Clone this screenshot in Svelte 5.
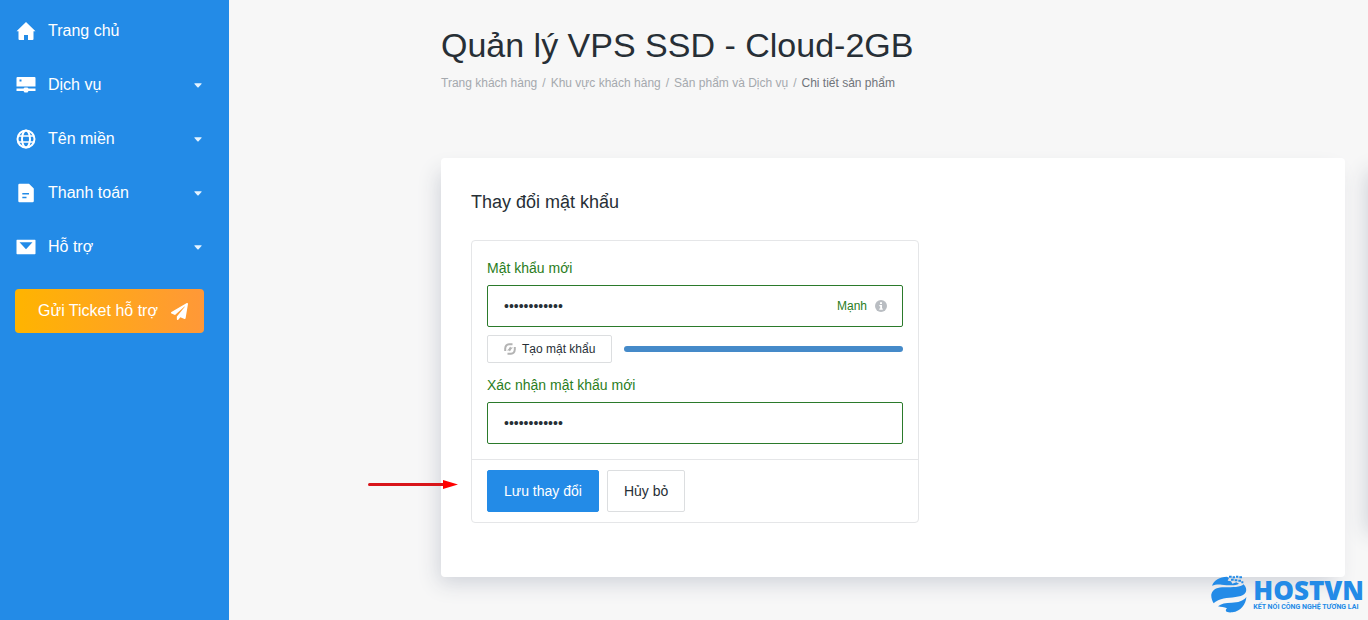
<script>
    const menu = [
        { name: 'Trang chủ', icon: 'home' },
        { name: 'Dịch vụ', icon: 'server', children: true },
        { name: 'Tên miền', icon: 'globe', children: true },
        { name: 'Thanh toán', icon: 'file', children: true },
        { name: 'Hỗ trợ', icon: 'mail', children: true },
    ];

    const crumbs = ['Trang khách hàng', 'Khu vực khách hàng', 'Sản phẩm và Dịch vụ'];

    let password = $state('cloudvps2024');
    let confirmation = $state('cloudvps2024');
    let strength = $state(100);

    function generate() {
        const chars = 'abcdefghjkmnpqrstuvwxyz23456789';
        password = Array.from({ length: 12 }, () => chars[Math.floor(Math.random() * chars.length)]).join('');
        confirmation = password;
        strength = 100;
    }

    function reset() {
        password = '';
        confirmation = '';
        strength = 0;
    }
</script>

<div class="page">
    <aside class="sidebar">
        <nav>
            {#each menu as item}
                <a class="menu-item" href="#{item.icon}">
                    <svg class="menu-icon" viewBox="0 0 20 20" fill="#fff" aria-hidden="true">
                        {#if item.icon === 'home'}
                            <path d="M10 1 L19.5 10.2 H17.5 V18 Q17.5 19 16.5 19 H12 V14 H8 V19 H3.5 Q2.5 19 2.5 18 V10.2 H.5 Z" />
                        {:else if item.icon === 'server'}
                            <path fill-rule="evenodd" d="M1.5 2 H18.5 Q19.5 2 19.5 3 V11.5 H.5 V3 Q.5 2 1.5 2 Z M3.5 4.500 V6.500 H5.5 V4.500 Z" />
                            <path d="M.5 13.500 H7.500 L8.500 12.500 H11.500 L12.500 13.500 H19.5 V16 H12.500 L11.500 17.5 H8.500 L7.500 16 H.5 Z" />
                        {:else if item.icon === 'globe'}
                            <g fill="none" stroke="#fff" stroke-width="2">
                                <circle cx="10" cy="10" r="8.5" />
                                <ellipse cx="10" cy="10" rx="4" ry="8.5" />
                                <path d="M2 7 H18 M2 13 H18" stroke-width="1.700" />
                            </g>
                        {:else if item.icon === 'file'}
                            <path fill-rule="evenodd" d="M3.5 .8 H13 L17.8 5.5 V18 Q17.8 19.3 16.5 19.3 H3.5 Q2.3 19.3 2.3 18 V2 Q2.3 .8 3.5 .8 Z M6.3 10 V11.5 H13 V10 Z M6.3 13.8 V15.3 H10.5 V13.8 Z" />
                        {:else}
                            <path fill-rule="evenodd" d="M1 2.8 H19 Q19.5 2.8 19.5 3.5 V16.5 Q19.5 17.3 18.8 17.3 H1.2 Q.5 17.3 .5 16.5 V3.5 Q.5 2.8 1 2.8 Z M3.5 5.2 L10 12.3 L16.5 5.2 Z" />
                        {/if}
                    </svg>
                    <span class="menu-name">{item.name}</span>
                    {#if item.children}
                        <svg class="caret" viewBox="0 0 8 5" fill="#e4f3ff" aria-hidden="true"><path d="M.8 .3 H7.2 Q8 .5 7.5 1.1 L4.6 4.3 Q4 4.8 3.4 4.3 L.5 1.1 Q0 .5 .8 .3 Z" /></svg>
                    {/if}
                </a>
            {/each}
        </nav>
        <a class="ticket" href="#ticket">
            Gửi Ticket hỗ trợ
            <svg class="plane" viewBox="0 0 512 512" fill="#fff" aria-hidden="true">
                <path d="M476 3.2 12.500 270.600c-18.100 10.400-15.800 35.600 2.200 43.200L121 358.400l287.300-253.200c5.500-4.900 13.300 2.600 8.600 8.300L176 407v80.500c0 23.600 28.500 32.900 42.500 15.800L282 426l124.600 52.200c14.200 6 30.400-2.900 33-18.200l72-432C515 7.800 493.300-6.800 476 3.200z" />
            </svg>
        </a>
    </aside>

    <main class="content">
        <header class="page-header">
            <h1>Quản lý VPS SSD - Cloud-2GB</h1>
            <nav class="breadcrumb">
                {#each crumbs as crumb}
                    <a href="#top">{crumb}</a>
                    <span class="slash">/</span>
                {/each}
                <span class="current">Chi tiết sản phẩm</span>
            </nav>
        </header>

        <div class="columns">
            <section class="card">
                <h2>Thay đổi mật khẩu</h2>

                <form class="panel" onsubmit={(e) => e.preventDefault()}>
                    <div class="panel-body">
                        <label for="password">Mật khẩu mới</label>
                        <div class="field">
                            <input id="password" type="password" bind:value={password} />
                            <span class="strength">
                                Mạnh
                                <svg viewBox="0 0 12 12" aria-hidden="true">
                                    <circle cx="6" cy="6" r="6" fill="#b9bdc2" />
                                    <path d="M5 2.200 H7 V4 H5 Z M4.300 5 H7 V8.500 H7.800 V9.700 H4.300 V8.500 H5.200 V6.200 H4.300 Z" fill="#fff" />
                                </svg>
                            </span>
                        </div>
                        <div class="generator">
                            <button type="button" class="button small" onclick={generate}>
                                <svg viewBox="0 0 12 12" fill="none" stroke="#b3b3b3" stroke-width="2" aria-hidden="true">
                                    <path d="M1.200 8 V5.500 Q1.500 1.500 5 1.200 H8.500 M10.800 4 V6.500 Q10.500 10.500 7 10.800 H3.500" />
                                    <path d="M4.500 3 V7 H8.500 Z M7.500 9 V5 H3.500 Z" fill="#b3b3b3" stroke="none" transform="rotate(90 6 6)" />
                                </svg>
                                Tạo mật khẩu
                            </button>
                            <div class="progress">
                                <div class="progress-bar" style="width: {strength}%"></div>
                            </div>
                        </div>
                        <label for="confirmation">Xác nhận mật khẩu mới</label>
                        <div class="field">
                            <input id="confirmation" type="password" bind:value={confirmation} />
                        </div>
                    </div>
                    <div class="panel-footer">
                        <button type="submit" class="button primary">Lưu thay đổi</button>
                        <button type="button" class="button" onclick={reset}>Hủy bỏ</button>
                    </div>
                </form>
            </section>
            <div class="side-card"></div>
        </div>
    </main>

    <svg class="pointer" viewBox="0 0 90 10" aria-hidden="true">
        <path d="M1.500 4.500 H76" stroke="#d8151a" stroke-width="3" stroke-linecap="round" />
        <path d="M75 0 L90 4.500 L75 9 Z" fill="#f00" />
    </svg>

    <div class="brand">
        <svg class="brand-mark" viewBox="12 20 108 114" fill="#238be7" aria-hidden="true">
            <path d="M15 52 C21 36 38 25 60 25 L66 29 L62 37 L72 39 L76 46 L88 42 L96 46 C84 54 62 50 44 49 C32 48 24 49 15 52 Z" />
            <path d="M13 78 C18 61 33 57 52 57 C78 57 100 57 110 48 C121 60 120 73 108 80 C92 89 62 86 42 93 C32 96 26 100 20 105 C15 97 12 88 13 78 Z" />
            <path d="M33 114 C42 106 56 103 74 103 C93 103 109 98 118 86 C117 108 101 129 76 132 C58 134 52 128 60 120 C52 116 42 116 33 114 Z" />
            <path d="M66 22 h8 v6 h-8 z M77 24 h7 v6 h-7 z M72 31 h8 v6 h-8 z M87 22 h7 v6 h-7 z M83 33 h8 v6 h-8 z M97 24 h8 v6 h-8 z M94 34 h8 v6 h-8 z M103 39 h6 v6 h-6 z" />
        </svg>
        <div class="brand-text">
            <strong>HOSTVN</strong>
            <span>KẾT NỐI CÔNG NGHỆ TƯƠNG LAI</span>
        </div>
    </div>
</div>

<style>
    :global(body) {
        margin: 0;
        background: #f7f7f7;
    }

    .page {
        position: relative;
        display: flex;
        min-height: 100vh;
        overflow: hidden;
        font-family: "Liberation Sans", Arial, sans-serif;
        font-size: 14px;
        color: #272f36;
    }

    a {
        text-decoration: none;
    }

    .sidebar {
        box-sizing: border-box;
        flex: none;
        width: 229px;
        padding: 4px 0;
        background: #238be7;
    }

    .menu-item {
        display: flex;
        align-items: center;
        height: 54px;
        padding: 0 27px 0 16px;
        color: #fff;
        font-size: 16px;
    }

    .menu-icon {
        width: 20px;
        height: 20px;
        margin-right: 12px;
    }

    .menu-name {
        flex: 1;
    }

    .caret {
        width: 8px;
        height: 5px;
    }

    .ticket {
        display: flex;
        align-items: center;
        justify-content: space-between;
        height: 44px;
        margin: 15px 25px 0 15px;
        padding: 0 16px 0 23px;
        border-radius: 4px;
        background: linear-gradient(90deg, #ffb400, #ff9838);
        color: #fff;
        font-size: 16px;
    }

    .plane {
        width: 17px;
        height: 17px;
    }

    .content {
        flex: 1;
        min-width: 0;
        padding: 24px 0 43px 212px;
    }

    h1 {
        margin: 0;
        font-size: 34px;
        font-weight: 400;
        line-height: 42px;
    }

    .breadcrumb {
        display: flex;
        gap: 5px;
        margin-top: 8px;
        font-size: 12px;
        line-height: 18px;
    }

    .breadcrumb a,
    .slash {
        color: #a5a9ae;
    }

    .current {
        color: #70747a;
    }

    .columns {
        display: flex;
        gap: 23px;
        margin-top: 66px;
    }

    .card {
        box-sizing: border-box;
        flex: 1;
        padding: 30px 30px 54px;
        border-radius: 4px;
        background: #fff;
        box-shadow: -6px 10px 20px -4px #cfd2d9;
    }

    .side-card {
        width: 300px;
        margin: 0 -300px 50px 0;
        box-shadow: -6px 10px 20px -4px #cfd2d9;
    }

    h2 {
        margin: 0 0 24px;
        font-size: 18px;
        font-weight: 400;
        line-height: 28px;
    }

    .panel {
        box-sizing: border-box;
        max-width: 448px;
        border: 1px solid #e5e6e8;
        border-radius: 4px;
    }

    .panel-body {
        padding: 17px 15px 15px;
    }

    label {
        display: block;
        margin-bottom: 7px;
        color: #2a7d22;
        line-height: 20px;
    }

    .field {
        display: flex;
        align-items: center;
        box-sizing: border-box;
        height: 42px;
        padding: 0 15px 0 16px;
        border: 1px solid #2b7a2b;
        border-radius: 2px;
    }

    input {
        flex: 1;
        min-width: 0;
        padding: 0;
        border: 0;
        outline: 0;
        background: none;
        color: #272f36;
        font: inherit;
    }

    .strength {
        display: flex;
        align-items: center;
        gap: 8px;
        color: #2a7d22;
        font-size: 12px;
    }

    .strength svg,
    .small svg {
        width: 12px;
        height: 12px;
    }

    .generator {
        display: flex;
        align-items: center;
        gap: 12px;
        margin: 8px 0 12px;
    }

    .button {
        height: 42px;
        padding: 0 16px;
        border: 1px solid #dcdee0;
        border-radius: 2px;
        background: #fff;
        color: #272f36;
        font: inherit;
        cursor: pointer;
    }

    .primary {
        border-color: #238be7;
        background: #238be7;
        color: #fff;
    }

    .small {
        display: flex;
        align-items: center;
        gap: 6px;
        height: 28px;
        font-size: 12px;
    }

    .progress {
        flex: 1;
        height: 6px;
        border-radius: 3px;
        overflow: hidden;
    }

    .progress-bar {
        height: 100%;
        background: #458ac9;
    }

    .panel-footer {
        display: flex;
        gap: 8px;
        padding: 10px 15px;
        border-top: 1px solid #e5e6e8;
    }

    .pointer {
        position: absolute;
        top: 480px;
        left: 368px;
        width: 90px;
        height: 10px;
    }

    .brand {
        position: absolute;
        right: 4px;
        bottom: 7px;
        display: flex;
        align-items: center;
        gap: 6px;
        color: #238be7;
    }

    .brand-mark {
        width: 36px;
        height: 38px;
    }

    .brand-text {
        display: flex;
        flex-direction: column;
    }

    .brand-text strong {
        font-family: "Open Sans", "Noto Sans", sans-serif;
        font-size: 26px;
        font-weight: 800;
        line-height: 26px;
    }

    .brand-text span {
        font-family: Roboto, sans-serif;
        font-size: 7px;
        font-weight: 700;
        line-height: 8px;
    }
</style>
